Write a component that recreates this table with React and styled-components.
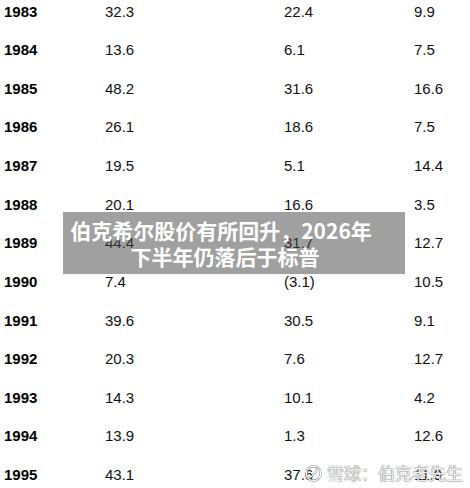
import React from 'react';
import styled, { createGlobalStyle } from 'styled-components';

const GlobalStyle = createGlobalStyle`
  html, body {
    margin: 0;
    padding: 0;
    background: #fff;
  }
  body {
    font-family: "Liberation Sans", Arial, sans-serif;
  }
`;

const Page = styled.div`
  position: relative;
  width: 470px;
  height: 488px;
  overflow: hidden;
  background: #fff;
`;

const Table = styled.div`
  display: grid;
  grid-template-columns: 101px 179px 130px 1fr;
  grid-auto-rows: 38.64px;
  align-items: center;
  margin-top: -8.3px;
  padding-left: 4px;
`;

const Cell = styled.div`
  font-size: 15px;
  color: ${({ $year }) => ($year ? '#000' : '#111')};
  font-weight: ${({ $year }) => ($year ? 700 : 400)};
  white-space: nowrap;
`;

const Banner = styled.div`
  position: absolute;
  left: 63px;
  top: 212px;
  width: 342px;
  height: 62px;
  background: rgba(72, 72, 72, 0.52);
  display: flex;
  flex-direction: column;
  align-items: center;
  justify-content: center;
  padding-right: 18px;
  box-sizing: border-box;
`;

const BannerLine = styled.div`
  font-family: "Noto Sans CJK SC", "Noto Sans", sans-serif;
  font-weight: 700;
  font-size: 21px;
  line-height: 26px;
  color: #fff;
  white-space: nowrap;
  padding-right: ${({ $shift }) => $shift || 0}px;
`;

const Watermark = styled.div`
  position: absolute;
  left: 305px;
  top: 462px;
  display: flex;
  align-items: center;
  gap: 5px;
  color: rgba(255, 255, 255, 0.92);
  font-family: "Noto Sans CJK SC", sans-serif;
  font-size: 17px;
  line-height: 22px;
  text-shadow: 0 0 1px rgba(80, 80, 80, 0.8), 0 0 1px rgba(80, 80, 80, 0.8);
  white-space: nowrap;
`;

const rows = [
  ['1983', '32.3', '22.4', '9.9'],
  ['1984', '13.6', '6.1', '7.5'],
  ['1985', '48.2', '31.6', '16.6'],
  ['1986', '26.1', '18.6', '7.5'],
  ['1987', '19.5', '5.1', '14.4'],
  ['1988', '20.1', '16.6', '3.5'],
  ['1989', '44.4', '31.7', '12.7'],
  ['1990', '7.4', '(3.1)', '10.5'],
  ['1991', '39.6', '30.5', '9.1'],
  ['1992', '20.3', '7.6', '12.7'],
  ['1993', '14.3', '10.1', '4.2'],
  ['1994', '13.9', '1.3', '12.6'],
  ['1995', '43.1', '37.6', '11.9'],
];

const SnowballLogo = () => (
  <svg width="17" height="17" viewBox="0 0 20 20" fill="none">
    <circle cx="10" cy="10" r="8.5" stroke="rgba(110,110,110,0.8)" strokeWidth="2.6" />
    <circle cx="10" cy="10" r="8.5" stroke="#fff" strokeWidth="1.4" />
    <path d="M6 14.5 C9 12.5 12.5 10 13.5 5.5" stroke="rgba(110,110,110,0.8)" strokeWidth="2.6" strokeLinecap="round" />
    <path d="M6 14.5 C9 12.5 12.5 10 13.5 5.5" stroke="#fff" strokeWidth="1.4" strokeLinecap="round" />
  </svg>
);

export default function App() {
  return (
    <Page>
      <GlobalStyle />
      <Table>
        {rows.map(([year, a, b, c]) => (
          <React.Fragment key={year}>
            <Cell $year>{year}</Cell>
            <Cell>{a}</Cell>
            <Cell>{b}</Cell>
            <Cell>{c}</Cell>
          </React.Fragment>
        ))}
      </Table>
      <Banner>
        <BannerLine $shift={8}>伯克希尔股价有所回升，2026年</BannerLine>
        <BannerLine>下半年仍落后于标普</BannerLine>
      </Banner>
      <Watermark>
        <SnowballLogo />
        <span>雪球：伯克老先生</span>
      </Watermark>
    </Page>
  );
}
